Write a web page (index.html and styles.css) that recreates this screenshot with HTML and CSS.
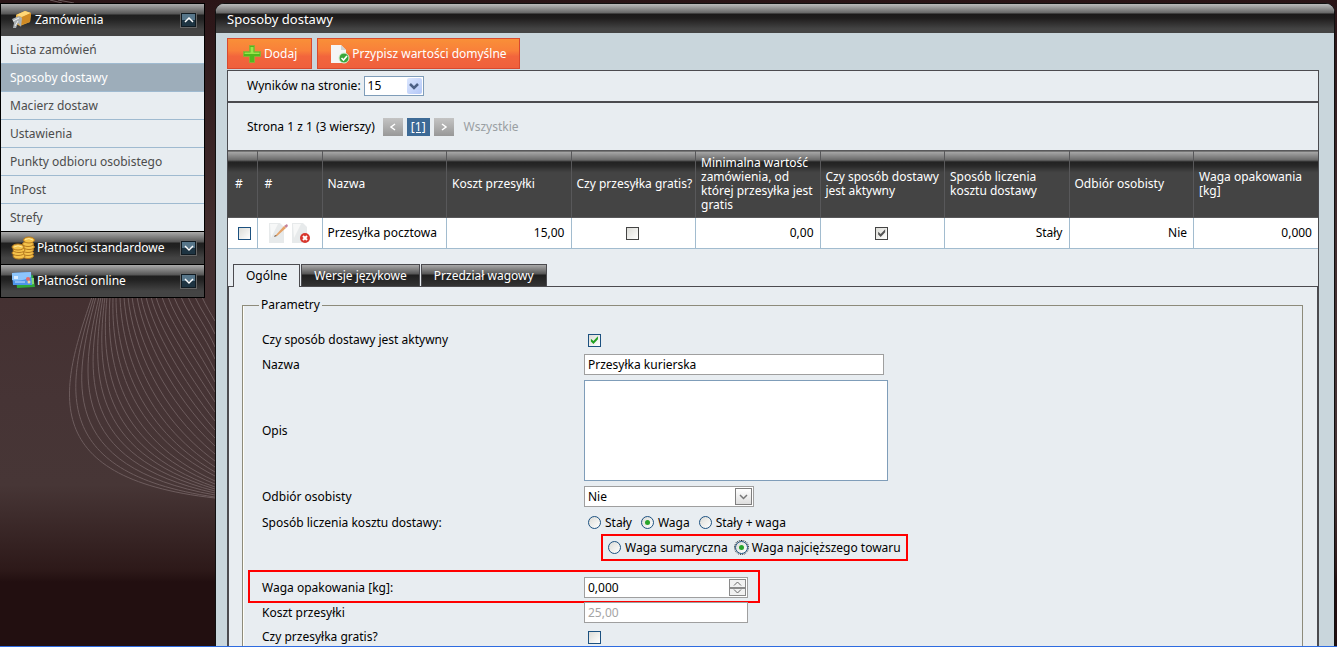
FILE: index.html
```html
<!DOCTYPE html>
<html lang="pl">
<head>
<meta charset="utf-8">
<title>Sposoby dostawy</title>
<link rel="stylesheet" href="styles.css">
</head>
<body>
<svg class="backdrop" id="waves" width="460" height="520" fill="none" aria-hidden="true">
  <path d="M50 0L62 3M58 0L74 3"/>
</svg>
<div class="shell">
  <nav class="sidebar">
    <h2 class="group group-open">
      <svg class="group-icon" width="22" height="22" viewBox="0 0 22 22"><path d="M5 6L14 2 20 4 19 13 9 17 5 15Z" fill="#e5a838"/><path d="M5 6L14 2 20 4 11 8Z" fill="#ffd777"/><path d="M11 8L20 4 19 13 10 16Z" fill="#d08a24"/><path d="M1 10L8 7 11 9 10 18 7 14 5 19 2 19 3 14Z" fill="#aab0b3"/><path d="M2 12L8 9M4 17L7 12" stroke="#eceeee"/></svg>
      <span>Zamówienia</span>
      <button class="toggle" type="button" aria-label="Zwiń"><svg width="12" height="12" fill="none" stroke="#fff"><path d="M2 8L6 4 10 8"/></svg></button>
    </h2>
    <a class="item" href="#">Lista zamówień</a>
    <a class="item item-active" href="#">Sposoby dostawy</a>
    <a class="item" href="#">Macierz dostaw</a>
    <a class="item" href="#">Ustawienia</a>
    <a class="item" href="#">Punkty odbioru osobistego</a>
    <a class="item" href="#">InPost</a>
    <a class="item" href="#">Strefy</a>
    <h2 class="group">
      <svg class="group-icon" width="24" height="24" viewBox="0 0 24 24"><g fill="#f4c24b" stroke="#b57a20" stroke-width="1"><ellipse cx="17" cy="20" rx="5.500" ry="2.500"/><ellipse cx="17" cy="17" rx="5.500" ry="2.500"/><ellipse cx="17" cy="14" rx="5.500" ry="2.500"/><ellipse cx="18" cy="11" rx="5.500" ry="2.500"/><ellipse cx="17" cy="8" rx="5.500" ry="2.500"/><ellipse cx="18" cy="4" rx="5.500" ry="3"/><ellipse cx="8" cy="20" rx="6" ry="3"/><ellipse cx="7" cy="17" rx="6" ry="2.500"/><ellipse cx="8" cy="14" rx="6" ry="2.500"/><ellipse cx="7" cy="11" rx="6" ry="3"/></g><path d="M14 3.500Q18 1.500 22 4M3 11Q7 8.500 11 11" stroke="#ffeaa0" fill="none"/></svg>
      <span>Płatności standardowe</span>
      <button class="toggle" type="button" aria-label="Rozwiń"><svg width="12" height="12" fill="none" stroke="#fff"><path d="M2 4L6 8 10 4"/></svg></button>
    </h2>
    <h2 class="group">
      <svg class="group-icon" width="24" height="24" viewBox="0 0 24 24"><path d="M5 8L22 6 24 18 6 19Z" fill="#2fa83b"/><path d="M19 9l4 0 0 6-4 1Z" fill="#83db70"/><path d="M1 4L20 3 21 16 2 16Z" fill="#4d94ea"/><path d="M1 4L20 3 20 8Q10 13 1 11Z" fill="#8dc5fb"/><path d="M3 7h4v3H3z" fill="#d9ecff"/><path d="M4 13h10" stroke="#c8e1ff"/><circle cx="17" cy="10" r="2" fill="#e46b6b"/><circle cx="18" cy="13" r="1.500" fill="#f1d2a0"/></svg>
      <span>Płatności online</span>
      <button class="toggle" type="button" aria-label="Rozwiń"><svg width="12" height="12" fill="none" stroke="#fff"><path d="M2 4L6 8 10 4"/></svg></button>
    </h2>
  </nav>

  <main class="window">
    <h1 class="window-title">Sposoby dostawy</h1>
    <div class="window-body">
      <div class="toolbar">
        <button class="action" type="button">
          <svg width="20" height="20" viewBox="0 0 20 20"><path d="M7.500 1.500h5v6h6v5h-6v6h-5v-6h-6v-5h6z" fill="#51b81e" stroke="#8fae35"/><path d="M8.500 3h3v5.500h6v1.500h-15V8.500h6z" fill="#9ce34b"/></svg>
          <span>Dodaj</span>
        </button>
        <button class="action" type="button">
          <svg width="20" height="20" viewBox="0 0 20 20"><path d="M1 1h10l5 5v13H1z" fill="#f4f5f5"/><path d="M11 1v5h5z" fill="#cfd3d4"/><circle cx="14" cy="14" r="5" fill="#39a63b" stroke="#d3efcf"/><path d="M11.500 14l2 2 3.500-4" stroke="#fff" stroke-width="1.600" fill="none"/></svg>
          <span>Przypisz wartości domyślne</span>
        </button>
      </div>

      <section class="panel">
        <div class="per-page">
          <label for="per-page">Wyników na stronie:</label>
          <span class="combo combo-blue">
            <select id="per-page"><option>15</option></select>
            <span class="combo-arrow"><svg width="10" height="8" fill="none" stroke="#4d6185" stroke-width="2.500"><path d="M1 2L5 6 9 2"/></svg></span>
          </span>
        </div>
        <div class="pager">
          <span>Strona 1 z 1 (3 wierszy)</span>
          <button class="page-arrow page-first" type="button" aria-label="Poprzednia"><svg width="8" height="8" fill="none" stroke="#fff" stroke-width="1.500"><path d="M6 1L2 4 6 7"/></svg></button>
          <a class="page-current" href="#">[1]</a>
          <button class="page-arrow" type="button" aria-label="Następna"><svg width="8" height="8" fill="none" stroke="#fff" stroke-width="1.500"><path d="M2 1L6 4 2 7"/></svg></button>
          <span class="page-all">Wszystkie</span>
        </div>

        <table class="grid">
          <colgroup><col class="col-check"><col class="col-actions"><col span="8"></colgroup>
          <thead>
            <tr>
              <th class="mark">#</th><th class="mark">#</th><th>Nazwa</th><th>Koszt przesyłki</th><th class="nowrap">Czy przesyłka gratis?</th>
              <th>Minimalna wartość zamówienia, od której przesyłka jest gratis</th>
              <th>Czy sposób dostawy jest aktywny</th><th>Sposób liczenia kosztu dostawy</th><th>Odbiór osobisty</th><th>Waga opakowania [kg]</th>
            </tr>
          </thead>
          <tbody>
            <tr>
              <td class="pick"><input type="checkbox" aria-label="Zaznacz wiersz"></td>
              <td>
                <div class="row-actions">
                  <button class="icon-button" type="button" aria-label="Edytuj"><svg width="20" height="20" viewBox="0 0 20 20"><path d="M1 0h11l4 4v16H1z" fill="#e7eaeb"/><path d="M2 1h8L3 15z" fill="#f7f8f8"/><path d="M16 3l3-2 1 2-2 2z" fill="#c4829a"/><path d="M7 13L16 3l2 2-9 8z" fill="#e5a267"/><path d="M6 14l1-2 2 1z" fill="#77604e"/></svg></button>
                  <button class="icon-button" type="button" aria-label="Usuń"><svg width="20" height="20" viewBox="0 0 20 20"><path d="M1 0h11l4 4v16H1z" fill="#e7eaeb"/><path d="M2 1h8L3 15z" fill="#f7f8f8"/><circle cx="14" cy="15" r="5" fill="#d8372e"/><path d="M12 13l4 4M16 13l-4 4" stroke="#fff" stroke-width="2"/></svg></button>
                </div>
              </td>
              <td>Przesyłka pocztowa</td>
              <td class="right">15,00</td>
              <td class="center"><input class="tick-gray" type="checkbox" aria-label="Czy przesyłka gratis"></td>
              <td class="right">0,00</td>
              <td class="center"><input class="tick-gray" type="checkbox" aria-label="Czy aktywny" checked></td>
              <td class="right">Stały</td><td class="right">Nie</td><td class="right">0,000</td>
            </tr>
          </tbody>
        </table>

        <div class="tabs">
          <button class="tab tab-active" type="button">Ogólne</button>
          <button class="tab" type="button">Wersje językowe</button>
          <button class="tab" type="button">Przedział wagowy</button>
        </div>
        <form class="tab-page">
          <fieldset class="params">
            <legend>Parametry</legend>
            <div class="field">
              <label for="active">Czy sposób dostawy jest aktywny</label>
              <input type="checkbox" id="active" checked>
            </div>
            <div class="field">
              <label for="name">Nazwa</label>
              <input class="text text-wide" type="text" id="name" value="Przesyłka kurierska">
            </div>
            <div class="field">
              <label for="desc">Opis</label>
              <textarea class="area" id="desc"></textarea>
            </div>
            <div class="field">
              <label for="pickup">Odbiór osobisty</label>
              <span class="combo combo-gray">
                <select id="pickup"><option>Nie</option></select>
                <span class="combo-arrow"><svg width="9" height="8" fill="none" stroke="#777" stroke-width="1.500"><path d="M1 2L4.500 5.500 8 2"/></svg></span>
              </span>
            </div>
            <div class="field field-radios">
              <span>Sposób liczenia kosztu dostawy:</span>
              <div class="radios">
                <label><input type="radio" name="mode">Stały</label>
                <label><input type="radio" name="mode" checked>Waga</label>
                <label><input type="radio" name="mode">Stały + waga</label>
              </div>
              <div class="radios radios-marked">
                <label><input type="radio" name="weight">Waga sumaryczna</label>
                <label><input class="focused" type="radio" name="weight" checked>Waga najcięższego towaru</label>
              </div>
            </div>
            <div class="field field-marked">
              <label for="pack">Waga opakowania [kg]:</label>
              <span class="spin">
                <input class="text" type="text" id="pack" value="0,000">
                <span class="spin-buttons">
                  <button type="button" aria-label="Więcej"><svg width="9" height="5" fill="none" stroke="#666"><path d="M1 4.500L4.500 1 8 4.500"/></svg></button>
                  <button type="button" aria-label="Mniej"><svg width="9" height="5" fill="none" stroke="#666"><path d="M1 .500L4.500 4 8 .500"/></svg></button>
                </span>
              </span>
            </div>
            <div class="field">
              <label for="cost">Koszt przesyłki</label>
              <input class="text" type="text" id="cost" value="25,00" disabled>
            </div>
            <div class="field">
              <label for="free">Czy przesyłka gratis?</label>
              <input type="checkbox" id="free">
            </div>
          </fieldset>
        </form>
      </section>
    </div>
  </main>
</div>
<div class="taskbar"></div>
<script src="waves.js"></script>
</body>
</html>
```

FILE: waves.js
```javascript
// Fan of thin curves behind the sidebar, from the tight outer edge to the loose inner one.
const tops = [92, 94, 96, 99, 101, 103, 105, 107, 110, 113, 116, 120, 124, 128, 132, 137, 141, 146, 151, 156, 162, 168, 174, 181, 188, 195, 202];
const ends = [498, 497, 495, 493, 491, 489, 487, 484, 481, 476, 472, 467, 461, 454, 446, 438, 430, 421, 412, 402, 392, 382, 371, 359, 347, 334, 321];
const svg = document.getElementById("waves");
tops.forEach((x, i) => {
  const s = 1 - i / (tops.length - 1);
  const y = ends[i];
  const c1 = [x - 72 * s * s + 38 * s + 4, 298 + 8 + 79 * s];
  const c2 = [215 - 150 * s * s - 29 * s - 4, y + 130 * s * s - 143 * s - 7];
  const path = document.createElementNS("http://www.w3.org/2000/svg", "path");
  path.setAttribute("d", `M${x} 297C${c1} ${c2} 215 ${y}`);
  svg.append(path);
});
```

FILE: styles.css
```css
*, *::before, *::after { box-sizing: border-box; }

body {
  margin: 0;
  background: linear-gradient(#2b1517 0, #432f30 240px, #463435 400px, #473636 485px, #2d1919 570px, #220f10 582px);
  color: #000;
  font: 12px/14px "Noto Sans", Tahoma, sans-serif;
}

button, input, select, textarea { font: inherit; color: inherit; margin: 0; }
button { cursor: pointer; }

.backdrop { position: absolute; top: 0; left: 0; stroke: #6d5c5d; }

.shell {
  position: relative;
  display: flex;
  align-items: flex-start;
  gap: 10px;
  height: 100vh;
  padding: 3px 2px 0 0;
  overflow: hidden;
}

/* Sidebar */
.sidebar { flex: 0 0 205px; border: 1px solid #000; }

.group {
  display: flex;
  align-items: center;
  gap: 2px;
  height: 33px;
  margin: 0;
  padding: 0 7px 0 10px;
  border-top: 1px solid #000;
  background: linear-gradient(#aaa 0, #555 10px, #1f1f1f 11px, #222 15px, #444 26px);
  color: #fff;
  font-size: 12px;
  font-weight: normal;
}
.group span { flex: 1; white-space: nowrap; }
.group-icon { flex: none; }
.group-open { height: 32px; border-top: 0; }

.toggle {
  display: grid;
  place-items: center;
  width: 17px;
  height: 16px;
  padding: 0;
  border: 2px solid #111b22;
  outline: 1px solid #666;
  outline-offset: -1px;
  background: linear-gradient(#57768a 0 50%, #1e3442 50%);
}
.toggle svg { stroke-width: 1.500; }

.item {
  display: block;
  height: 28px;
  padding: 7px 9px 6px;
  border-bottom: 1px solid #9fbad0;
  background: #e8edf1;
  color: #4c4c4c;
  text-decoration: none;
}
.item:last-of-type { height: 27px; border-bottom: 0; }
.item-active { background: #9dadba; color: #fff; }

/* Window */
.window {
  flex: 1;
  min-width: 0;
  border: 1px solid #111;
  border-radius: 9px 9px 0 0;
  overflow: hidden;
  background: #c9d6dc;
}
.window-title {
  height: 29px;
  margin: 0;
  padding: 7px 11px;
  background: linear-gradient(#bbb 0, #666 9px, #1b1919 10px, #1f1d1d 14px, #444 25px);
  color: #fff;
  font-size: 13px;
  line-height: 16px;
  font-weight: normal;
}
.window-body { padding: 5px 15px 0 11px; }

.toolbar { display: flex; gap: 5px; padding-bottom: 1px; }
.action {
  display: flex;
  align-items: center;
  gap: 2px;
  height: 31px;
  padding: 0 12px;
  border: 1px solid #d8492f;
  background: linear-gradient(#f98f38, #f9803a 40%, #f2653c 60%, #ef603c);
  color: #fff;
  white-space: nowrap;
}
.action:first-child { padding: 0 14px; }

.panel { border: 1px solid #4b4b4f; border-bottom: 0; background: #e8edf1; }
.per-page {
  display: flex;
  align-items: center;
  gap: 3px;
  height: 32px;
  padding-left: 19px;
  border-bottom: 2px solid #4b4b4f;
}
.pager { display: flex; align-items: center; gap: 4px; height: 47px; padding-left: 19px; }
.page-arrow {
  display: grid;
  place-items: center;
  width: 20px;
  height: 18px;
  padding: 0;
  border: 0;
  background: linear-gradient(#c4c4c4, #989898);
}
.page-first { margin-left: 4px; }
.page-current { padding: 2px 4px; background: #3d6a96; color: #fff; }
.page-all { margin-left: 6px; color: #9a9fa3; }

/* Drop-downs */
.combo { position: relative; display: inline-block; }
.combo select {
  appearance: none;
  display: block;
  width: 100%;
  height: 20px;
  padding: 0 3px;
  border: 1px solid #7f9db9;
  border-radius: 0;
  background: #fff;
}
.combo-arrow {
  position: absolute;
  top: 2px;
  right: 2px;
  bottom: 2px;
  display: grid;
  place-items: center;
  width: 15px;
  border-radius: 2px;
  background: linear-gradient(135deg, #dce7fe, #b3c7f7);
  pointer-events: none;
}
.combo-blue { width: 60px; }
.combo-gray { width: 170px; }
.combo-gray select { height: 21px; border-color: #9f9f9f; }
.combo-gray .combo-arrow { width: 17px; border: 1px solid #7f7f7f; border-radius: 0; background: linear-gradient(#fff, #dedede); }

/* Table */
.grid { width: 100%; table-layout: fixed; border-collapse: collapse; }
.col-check { width: 29px; }
.col-actions { width: 65px; }
.grid th {
  height: 67px;
  padding: 0 5px;
  border: 1px solid #58585a;
  background: linear-gradient(#aaa 0, #666 9px, #222 10px, #272727 14px, #444 21px);
  color: #fff;
  font-weight: normal;
  text-align: left;
}
.grid .mark { padding: 0 7px; }
.grid td {
  height: 31px;
  padding: 0 6px 0 5px;
  border: 1px solid #a2bccf;
  background: #fff;
  white-space: nowrap;
}
.grid tr > :first-child { border-left: 0; }
.grid tr > :last-child { border-right: 0; }
.grid .right { text-align: right; }
.grid .pick { padding: 0 0 0 10px; }
.grid .nowrap { padding-right: 0; white-space: nowrap; }
.grid .center input { margin: 0 auto; }
.row-actions { display: flex; gap: 3px; padding-left: 5px; }
.icon-button { width: 20px; height: 20px; padding: 0; border: 0; background: none; }

/* Tick boxes and radios */
input[type="checkbox"], input[type="radio"] {
  appearance: none;
  display: grid;
  place-items: center;
  flex: none;
  width: 13px;
  height: 13px;
  border: 1px solid #1c5180;
  background: linear-gradient(135deg, #dcdcd7, #fff);
}
input[type="radio"] { border-radius: 50%; }
input[type="checkbox"]:checked::before {
  content: "";
  width: 9px;
  height: 9px;
  background: #21a121;
  clip-path: polygon(10% 35%, 38% 60%, 88% 8%, 88% 42%, 38% 94%, 10% 68%);
}
input[type="radio"]:checked::before {
  content: "";
  width: 5px;
  height: 5px;
  border-radius: 50%;
  background: #29a52b;
}
input[type="checkbox"].tick-gray { border-color: #444; }
input[type="checkbox"].tick-gray:checked::before { background: #555; }

/* Tabs */
.tabs {
  display: flex;
  gap: 1px;
  margin-top: 15px;
  padding-left: 5px;
  border-bottom: 1px solid #4b4b4f;
}
.tab {
  height: 22px;
  padding: 0 12px;
  border: 1px solid #4b4b4f;
  border-bottom: 0;
  background: linear-gradient(#aaa 0, #555 9px, #1f1f1f 10px, #333);
  color: #fff;
}
.tab-active { height: 23px; margin-bottom: -1px; background: #e8edf1; color: #000; }

/* Form */
.tab-page { padding: 11px 14px 20px 13px; border: 1px solid #4b4b4f; border-width: 0 1px; }
.params {
  display: flex;
  flex-direction: column;
  gap: 5px;
  min-width: 0;
  margin: 0;
  padding: 19px 19px 20px;
  border: 1px solid #8d8b7b;
  box-shadow: inset 1px 0 #fffef5;
}
.params legend { margin-left: -3px; padding: 0 2px; }
.field {
  position: relative;
  display: grid;
  grid-template-columns: 322px 1fr;
  align-items: center;
  justify-items: start;
  min-height: 18px;
}
.field > input[type="checkbox"] { margin-left: 4px; }
.text {
  width: 164px;
  height: 21px;
  padding: 0 3px;
  border: 1px solid #9f9f9f;
  background: #fff;
}
.text:disabled { color: #a5a5a5; }
.text-wide { width: 300px; }
.area { display: block; width: 304px; height: 101px; border: 1px solid #7f9db9; background: #fff; resize: none; }

.field-radios { grid-template-rows: 21px 27px; row-gap: 1px; }
.radios { display: flex; gap: 9px; padding-left: 4px; white-space: nowrap; }
.radios label { display: flex; align-items: center; gap: 4px; }
.radios-marked { grid-column: 2; gap: 7px; height: 27px; margin-left: 17px; padding: 0 5px; border: 2px solid #f00; }
.focused { outline: 1px dotted #222; }

.field-marked { margin-top: 11px; }
.field-marked::after {
  content: "";
  position: absolute;
  top: -7px;
  bottom: -5px;
  left: -14px;
  width: 512px;
  border: 2px solid #f00;
  pointer-events: none;
}
.field-marked + .field { margin-top: -1px; }
.spin { position: relative; display: block; }
.spin .text { display: block; }
.spin-buttons {
  position: absolute;
  top: 2px;
  right: 2px;
  bottom: 2px;
  display: grid;
  grid-template-rows: 1fr 1fr;
  width: 17px;
}
.spin-buttons button {
  display: grid;
  place-items: center;
  min-height: 0;
  padding: 0;
  border: 1px solid #8a8a8a;
  background: #f1f1f1;
}

.taskbar { position: fixed; left: 0; right: 0; bottom: 0; height: 1px; background: #2d6be0; }
```
